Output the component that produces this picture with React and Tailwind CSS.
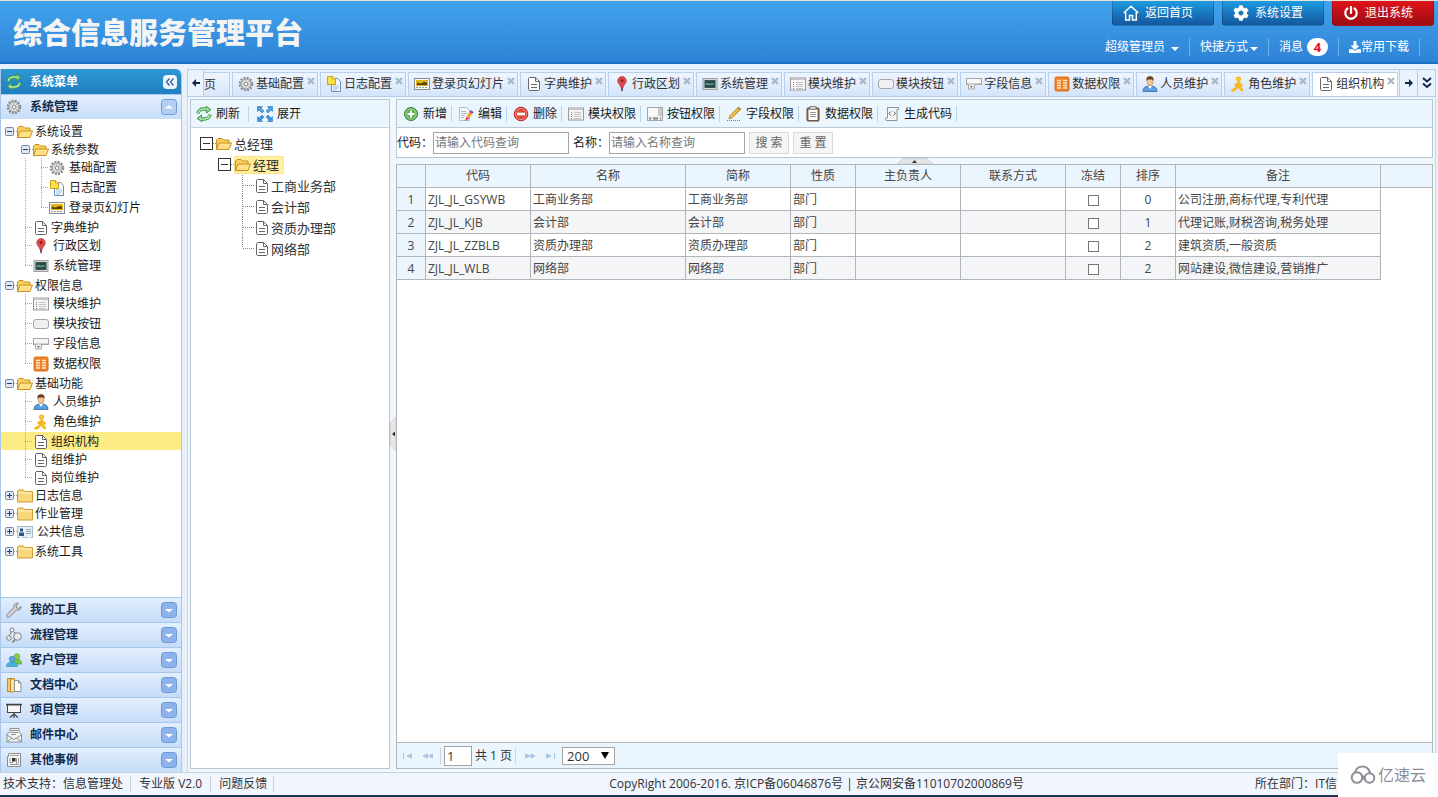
import React, { useState } from 'react';
import { FaCog, FaPowerOff, FaDownload } from 'react-icons/fa';

const iconShapes = {
  refresh: (
    <g fill="none" strokeLinejoin="round">
      <path d="M2 7.500C2.300 4.500 5 2.800 8 3h3" stroke="#3f9a48" strokeWidth="3.400" />
      <path d="M10 .3L15 3.600 10.500 7z" fill="#8fd68c" stroke="#3f9a48" />
      <path d="M14 8.500C13.700 11.500 11 13.200 8 13H5" stroke="#3f9a48" strokeWidth="3.400" />
      <path d="M6 15.700L1 12.400 5.500 9z" fill="#8fd68c" stroke="#3f9a48" />
      <path d="M2.200 7C2.800 4.500 5 3 8 3h4M13.800 9C13.200 11.500 11 13 8 13H4" stroke="#b5e8b0" strokeWidth="1.600" />
    </g>
  ),
  gear: (
    <g fill="none" stroke="#8c8c8c">
      <circle cx="8" cy="8" r="6" strokeWidth="2.600" strokeDasharray="1.900 1.240" />
      <circle cx="8" cy="8" r="5" fill="#e3e3e3" stroke="#9a9a9a" />
      <circle cx="8" cy="8" r="1.800" fill="#fff" />
      <path d="M8 3.500v2.500M8 10v2.500M3.500 8H6M10 8h2.500M5 5l1.500 1.500M11 5L9.500 6.500M5 11l1.500-1.500M11 11L9.500 9.500" stroke="#b5b5b5" />
    </g>
  ),
  log: (
    <g>
      <path d="M5.500 2.500h6l3 3v10h-9z" fill="#f5f9fd" stroke="#6f8fae" />
      <path d="M7 10h6M7 12h6M7 14h4" stroke="#9fc0dd" />
      <path d="M1.500.5h5l3 2.500v5.500h-8z" fill="#fbe04a" stroke="#c9a21c" />
      <path d="M6.500.5V3h3" fill="#fff6b8" stroke="#c9a21c" />
    </g>
  ),
  slide: (
    <g>
      <rect x=".5" y="2.500" width="15" height="11" fill="#fafafa" stroke="#8a8a8a" />
      <rect x="2" y="4" width="12" height="6" fill="#e0b414" />
      <path d="M3 6.500l3 1 2-.5 2-1 3 .5v2.500H3z" fill="#5a4508" />
      <path d="M2 11.500h12" stroke="#999" strokeDasharray="2 1" />
    </g>
  ),
  doc: (
    <g fill="none" stroke="#666">
      <path d="M2.500 3c0-1 .5-1.500 1.500-1.500h5.500l4 4V13c0 1-.5 1.500-1.500 1.500H4c-1 0-1.500-.5-1.500-1.500z" fill="#fff" />
      <path d="M9.500 1.500v4h4M5 8.500h6M5 11.500h6" />
    </g>
  ),
  pin: (
    <g>
      <path d="M7 8h2v6l-1 2-1-2z" fill="#5c5c66" />
      <path d="M8 .5a4.300 4.300 0 0 1 4.300 4.300C12.300 7.500 9.500 9 8.800 12H7.200C6.500 9 3.700 7.500 3.700 4.800A4.300 4.300 0 0 1 8 .5z" fill="#e1484a" stroke="#b32c32" strokeWidth=".6" />
      <circle cx="8" cy="4.600" r="1.500" fill="#8d1b22" />
    </g>
  ),
  monitor: (
    <g>
      <rect x="1" y="2.500" width="14" height="11" fill="#d5d8d8" stroke="#9da2a2" />
      <rect x="3" y="4.500" width="10" height="7" fill="#234b47" stroke="#3a5553" />
      <path d="M4 9l1.500-2L7 9l1.500-1h3" fill="none" stroke="#9fe0c8" strokeWidth=".9" />
    </g>
  ),
  list: (
    <g>
      <rect x=".5" y="2" width="15" height="12" fill="#f6f6f6" stroke="#9a9a9a" />
      <path d="M1 3.500h14" stroke="#c5c5c5" />
      <path d="M3 6.500h1M3 8.500h1M3 10.500h1M3 12.500h1" stroke="#888" />
      <path d="M6 6.500h7M6 8.500h7M6 10.500h7M6 12.500h7" stroke="#c2c2c2" />
    </g>
  ),
  button: <rect x=".5" y="3.500" width="15" height="9" rx="2.500" fill="#f0f0f3" stroke="#a6a6ad" />,
  combo: (
    <g>
      <rect x=".5" y="2.500" width="15" height="6" fill="#f7f7f7" stroke="#a5a5a5" />
      <path d="M1 7.500h14" stroke="#d0d0d0" />
      <path d="M2.500 8.500v4.500h6V8.500" fill="#f4f4f4" stroke="#a5a5a5" />
      <path d="M4 10h3L5.500 12z" fill="#666" />
    </g>
  ),
  data: (
    <g>
      <rect x="1" y="1" width="14" height="14" rx="1.500" fill="#f08024" stroke="#d9701c" />
      <path d="M3 4.500h4M9 4.500h4M3 7h4M9 7h4M3 9.500h4M9 9.500h4M3 12h4M9 12h4" stroke="#ffe8cc" strokeWidth="1.300" />
    </g>
  ),
  person: (
    <g>
      <path d="M1 15.500c0-4 2.500-5.500 7-5.500s7 1.500 7 5.500z" fill="#5b9be0" stroke="#356ba8" strokeWidth=".8" />
      <path d="M6 10l2 3 2-3z" fill="#fff" />
      <ellipse cx="8" cy="5.500" rx="3" ry="4" fill="#f3c59a" stroke="#a9713f" strokeWidth=".5" />
      <path d="M4.500 5C4 1 6 .3 8 .3s4 .7 3.500 4.700C10.800 3.200 9 3.500 8 3.500S5.200 3.200 4.500 5z" fill="#6b3f20" />
    </g>
  ),
  runner: (
    <g fill="none" stroke="#f5b820" strokeWidth="2.600" strokeLinecap="round" strokeLinejoin="round">
      <circle cx="8.500" cy="3" r="1.800" fill="#ffd54a" strokeWidth="1.500" />
      <path d="M8.500 6.500L8 10l4 4M8 10l-2.500 3-3 1.500M8.500 7L5.500 9M9 7l2.500 2.500" />
    </g>
  ),
  folderOpen: (
    <g stroke="#c8921a" strokeLinejoin="round">
      <path d="M.5 13.500V4L2 2.500h4L7.500 4h5.500v3" fill="#f9d05f" />
      <path d="M.5 13.500L3 7h12.500L13 13.500z" fill="#ffe08a" />
    </g>
  ),
  folder: (
    <g stroke="#cf9d30" strokeLinejoin="round">
      <path d="M.5 14V3l1-1h5L8 3.500h7.500V14z" fill="#f8d67c" />
      <path d="M1 5h14" stroke="#fff2c9" />
    </g>
  ),
  card: (
    <g>
      <rect x=".5" y="2.500" width="15" height="11" fill="#e4eff6" stroke="#a9bccb" />
      <path d="M3 4.500h3v3H3zM2 12V8.500h5V12z" fill="#2a5a85" />
      <path d="M9 5.500h5M9 7.500h5M9 9.500h5" stroke="#8fa6b8" />
      <path d="M3 13.500h2M11 13.500h2" stroke="#fff" />
    </g>
  ),
  wrench: (
    <path d="M15 4.500l-2.500 2-2-.8-.4-2 2.400-2C10.500.3 7.500 2 7.900 5.200L1.200 12.500c-1.300 1.600.8 3.600 2.300 2.200L10.500 8C13 8.800 15.500 7 15 4.500z" fill="#d4d4d4" stroke="#777" strokeWidth=".9" />
  ),
  flow: (
    <g fill="#eee" stroke="#858585">
      <path d="M6 3.500L3 9M6 3.500l5 4" fill="none" />
      <circle cx="6" cy="3" r="2" />
      <circle cx="3" cy="11" r="2.300" />
      <circle cx="11.500" cy="9.500" r="3.800" fill="#e3ebf1" />
      <path d="M9 12.500l-2.500 3" strokeWidth="1.800" />
    </g>
  ),
  customers: (
    <g>
      <circle cx="11" cy="4.500" r="2.800" fill="#8bd04a" stroke="#4b9a25" strokeWidth=".6" />
      <path d="M7 12c0-3.500 1.500-4.500 4.500-4.500s4.300 1.500 4.300 4.500z" fill="#7cc843" stroke="#4b9a25" strokeWidth=".6" />
      <circle cx="6" cy="7" r="2.700" fill="#5ba9e6" stroke="#2c73b4" strokeWidth=".6" />
      <path d="M.5 14.500C.5 11 3 10 6 10s5.500 1 5.500 4.500z" fill="#45b3d6" stroke="#2c8fb4" strokeWidth=".6" />
    </g>
  ),
  docs: (
    <g>
      <path d="M1.500 1.500h6v13h-6z" fill="#f7c86b" stroke="#c28a2b" />
      <path d="M4.500 2.500l4-1v13l-4 .8z" fill="#fde2a4" stroke="#c28a2b" />
      <path d="M8.500 3.500h4l2.500 2.500v8.500H8.500z" fill="#fff" stroke="#8d8d8d" />
      <path d="M12.500 3.500V6H15" fill="none" stroke="#8d8d8d" />
    </g>
  ),
  projector: (
    <g fill="none" stroke="#444">
      <path d="M0 2.500h16" strokeWidth="1.500" />
      <rect x="1.500" y="3" width="13" height="7.500" fill="#f7f7f7" />
      <path d="M8 10.500v3M8 12l-4 3.500M8 12l4 3.500M8 12v4" strokeWidth="1.200" />
    </g>
  ),
  mail: (
    <g stroke="#8b9494">
      <path d="M1 7l3-2V1.500h9V5l2.500 2v8H1z" fill="#f0f2f2" />
      <path d="M5 3.500h7M5 5.500h7M5 7.500h5" />
      <path d="M1 8l7 4.500L15.500 8M1 15l5-4M15.500 15l-5-4" fill="none" />
    </g>
  ),
  news: (
    <g>
      <path d="M2.500 1.500h12v13h-13v-10h1z" fill="#f7f7f7" stroke="#8b8b8b" />
      <path d="M4 3.500h9M4 12.500h9M4 10.500h3M10.500 6v7M12.500 6v5M4 6v5" stroke="#999" />
      <rect x="6" y="6" width="3.500" height="3.500" fill="#333" />
    </g>
  ),
  expand: (
    <g fill="#3d97e0" stroke="#1f6db3" strokeWidth=".5">
      <path d="M.5.500h5L4 2l3 3-2 2-3-3L.5 5.500zM15.500.5v5L14 4l-3 3-2-2 3-3L10.500.5zM.5 15.500v-5L2 12l3-3 2 2-3 3 1.500 1.500zM15.500 15.500h-5L12 14l-3-3 2-2 3 3 1.500-1.500z" />
      <path d="M2 2l3.500 3.500M14 2l-3.500 3.500" stroke="#b9e0ff" />
    </g>
  ),
  add: (
    <g>
      <circle cx="8" cy="8" r="6.500" fill="#5fb356" stroke="#3a7d35" />
      <circle cx="8" cy="8" r="5.200" fill="none" stroke="#b8e2b0" strokeWidth=".7" />
      <path d="M8 4.500v7M4.500 8h7" stroke="#fff" strokeWidth="2" />
    </g>
  ),
  remove: (
    <g>
      <circle cx="8" cy="8" r="6.800" fill="#e04a3c" stroke="#b12c22" />
      <circle cx="8" cy="8" r="5.600" fill="none" stroke="#f6a79f" strokeWidth=".7" />
      <path d="M4 8h8" stroke="#fff" strokeWidth="2.600" />
    </g>
  ),
  edit: (
    <g>
      <path d="M1.500 1.500h7l3 3v10h-10z" fill="#f7f9fc" stroke="#b3bfd0" />
      <path d="M3 5.500h5M3 7.500h6M3 9.500h4M3 11.500h3" stroke="#a9b8d0" />
      <path d="M13 6.500l-3 4.500" stroke="#f0a428" strokeWidth="3.400" />
      <path d="M12 5l3 2" stroke="#8a4fae" strokeWidth="2.500" />
      <path d="M8.500 10.500l-1.500 4.500 4.500-2.500z" fill="#e0455a" />
    </g>
  ),
  buttons: (
    <g>
      <rect x=".5" y="1.500" width="15" height="13" fill="#ededed" stroke="#a5a5a5" />
      <rect x="1" y="2" width="10" height="8" fill="#fafafa" />
      <rect x="11" y="2" width="4" height="8" fill="#cacaca" />
      <path d="M2 12.500h2M6 12.500h5M13 12.500h1" stroke="#888" strokeWidth="2" />
    </g>
  ),
  pencil: (
    <g>
      <path d="M12.500 1L15 3 6.500 11.500 3 13l1-3.500z" fill="#f1bc45" stroke="#a9762a" strokeWidth=".8" />
      <path d="M11.500 2L14 4" stroke="#777" />
      <path d="M1 14.500h14" stroke="#3f86d8" strokeDasharray="1 1" />
    </g>
  ),
  clipboard: (
    <g>
      <rect x="2" y="2" width="12" height="13" rx="1" fill="#8c6f57" stroke="#5f4a3a" />
      <rect x="3.500" y="3.500" width="9" height="10.500" fill="#fff" />
      <rect x="5" y=".5" width="6" height="3" fill="#d5d5d5" stroke="#666" strokeWidth=".7" />
      <path d="M5 6.500h6M5 8.500h6M5 10.500h6" stroke="#999" />
    </g>
  ),
  code: (
    <g fill="none" stroke="#8a9499">
      <path d="M3.500 12V1.500h11v2h-1.500V14.500H2.500C1.500 14.500 1.500 12.500 1.500 12h2" fill="#f3f5f6" />
      <path d="M7 5.500L5 7.500l2 2M9.500 5.500l2 2-2 2" stroke="#555" />
    </g>
  ),
};

const Icon = ({ name }) => (
  <svg viewBox="0 0 16 16" className="w-4 h-4 shrink-0" aria-hidden="true">{iconShapes[name]}</svg>
);

// rails: the branch cells drawn before a row. b = vertical line, t = tee, l = last elbow, e = empty
const menuTree = [
  { title: '系统设置', icon: 'folderOpen', toggle: 'minus', rails: '' },
  { title: '系统参数', icon: 'folderOpen', toggle: 'minus', rails: 'e' },
  { title: '基础配置', icon: 'gear', tall: true, rails: 'ebt' },
  { title: '日志配置', icon: 'log', tall: true, rails: 'ebt' },
  { title: '登录页幻灯片', icon: 'slide', tall: true, rails: 'ebl' },
  { title: '字典维护', icon: 'doc', rails: 'et' },
  { title: '行政区划', icon: 'pin', tall: true, rails: 'et' },
  { title: '系统管理', icon: 'monitor', tall: true, rails: 'el' },
  { title: '权限信息', icon: 'folderOpen', toggle: 'minus', rails: '' },
  { title: '模块维护', icon: 'list', tall: true, rails: 'et' },
  { title: '模块按钮', icon: 'button', tall: true, rails: 'et' },
  { title: '字段信息', icon: 'combo', tall: true, rails: 'et' },
  { title: '数据权限', icon: 'data', tall: true, rails: 'el' },
  { title: '基础功能', icon: 'folderOpen', toggle: 'minus', rails: '' },
  { title: '人员维护', icon: 'person', tall: true, rails: 'et' },
  { title: '角色维护', icon: 'runner', tall: true, rails: 'et' },
  { title: '组织机构', icon: 'doc', rails: 'et' },
  { title: '组维护', icon: 'doc', rails: 'et' },
  { title: '岗位维护', icon: 'doc', rails: 'el' },
  { title: '日志信息', icon: 'folder', toggle: 'plus', rails: '' },
  { title: '作业管理', icon: 'folder', toggle: 'plus', rails: '' },
  { title: '公共信息', icon: 'card', toggle: 'plus', tall: true, rails: '' },
  { title: '系统工具', icon: 'folder', toggle: 'plus', rails: '' },
];

const menuGroups = [
  { title: '我的工具', icon: 'wrench' },
  { title: '流程管理', icon: 'flow' },
  { title: '客户管理', icon: 'customers' },
  { title: '文档中心', icon: 'docs' },
  { title: '项目管理', icon: 'projector' },
  { title: '邮件中心', icon: 'mail' },
  { title: '其他事例', icon: 'news' },
];

const tabs = [
  { title: '基础配置', icon: 'gear' },
  { title: '日志配置', icon: 'log' },
  { title: '登录页幻灯片', icon: 'slide' },
  { title: '字典维护', icon: 'doc' },
  { title: '行政区划', icon: 'pin' },
  { title: '系统管理', icon: 'monitor' },
  { title: '模块维护', icon: 'list' },
  { title: '模块按钮', icon: 'button' },
  { title: '字段信息', icon: 'combo' },
  { title: '数据权限', icon: 'data' },
  { title: '人员维护', icon: 'person' },
  { title: '角色维护', icon: 'runner' },
  { title: '组织机构', icon: 'doc' },
];

const actions = [
  { title: '新增', icon: 'add' },
  { title: '编辑', icon: 'edit' },
  { title: '删除', icon: 'remove' },
  { title: '模块权限', icon: 'list' },
  { title: '按钮权限', icon: 'buttons' },
  { title: '字段权限', icon: 'pencil' },
  { title: '数据权限', icon: 'clipboard' },
  { title: '生成代码', icon: 'code' },
];

const departments = ['工商业务部', '会计部', '资质办理部', '网络部'];

const columns = ['代码', '名称', '简称', '性质', '主负责人', '联系方式', '冻结', '排序', '备注'];

const rows = [
  { code: 'ZJL_JL_GSYWB', name: '工商业务部', kind: '部门', sort: 0, remark: '公司注册,商标代理,专利代理' },
  { code: 'ZJL_JL_KJB', name: '会计部', kind: '部门', sort: 1, remark: '代理记账,财税咨询,税务处理' },
  { code: 'ZJL_JL_ZZBLB', name: '资质办理部', kind: '部门', sort: 2, remark: '建筑资质,一般资质' },
  { code: 'ZJL_JL_WLB', name: '网络部', kind: '部门', sort: 2, remark: '网站建设,微信建设,营销推广' },
];

const Header = () => (
  <header className="h-16 shrink-0 flex justify-between border-t border-t-[#e6e6dc] border-b-2 border-b-[#1471c4] bg-gradient-to-b from-[#41a3ec] to-[#2f83d6] text-white overflow-hidden">
    <h1 className="pl-[13px] pt-[11px] text-[29px] leading-[42px] font-black text-[#f4f4f4]">综合信息服务管理平台</h1>
    <div className="flex flex-col items-end">
      <div className="flex gap-2 pr-1">
        <HeaderButton title="返回首页" tone="from-[#1e9be0] to-[#15579f]">
          <svg viewBox="0 0 16 16" className="w-4 h-4" fill="none" stroke="#fff" strokeWidth="1.500">
            <path d="M.7 8L8 1.300 15.300 8M2.700 7v8h3.800v-4.500h3V15h3.800V7" />
          </svg>
        </HeaderButton>
        <HeaderButton title="系统设置" tone="from-[#1e9be0] to-[#15579f]"><FaCog className="w-4 h-4" /></HeaderButton>
        <HeaderButton title="退出系统" tone="from-[#e0141a] to-[#9c0d14]"><FaPowerOff className="w-4 h-4 p-px" /></HeaderButton>
      </div>
      <nav className="flex items-center mt-3 mr-[18px] leading-[18px]">
        <a href="#user" className="flex items-center gap-1.5 px-2.5 border-r border-[#6bb0ea]">超级管理员<Caret /></a>
        <a href="#shortcut" className="flex items-center gap-0.5 px-2.5 border-r border-[#6bb0ea]">快捷方式<Caret /></a>
        <a href="#message" className="flex items-center gap-1 px-2.5 border-r border-[#6bb0ea]">
          消息<span className="w-[21px] h-[18px] rounded-full bg-white text-[#e8101a] text-[13px] leading-[18px] font-bold text-center">4</span>
        </a>
        <a href="#download" className="flex items-center px-2.5 border-r border-[#6bb0ea]"><FaDownload className="w-3 h-3" />常用下载</a>
      </nav>
    </div>
  </header>
);

const HeaderButton = ({ title, tone, children }) => (
  <button className={`w-[102px] h-[25px] flex items-center pl-2.5 gap-1.5 rounded-b border border-t-0 border-black/20 bg-gradient-to-b ${tone}`}>
    {children}
    {title}
  </button>
);

const Caret = () => <svg viewBox="0 0 8 4" className="w-2 h-1 mt-1" fill="#fff"><path d="M0 0h8L4 4z" /></svg>;

const Rail = ({ kind, tall }) => {
  const h = tall ? 20 : 18;
  return (
    <svg width="16" height={h} className="shrink-0" stroke="#a8a8a8" strokeDasharray="1 1" fill="none">
      {kind !== 'e' && <path d={`M8.500 0V${kind === 'l' ? 9 : h}`} />}
      {(kind === 't' || kind === 'l') && <path d="M8 9.500h8" />}
    </svg>
  );
};

const Toggle = ({ kind }) => (
  <svg viewBox="0 0 16 18" className="w-4 h-[18px] shrink-0" fill="none">
    <path d="M13 9.500h3" stroke="#a8a8a8" strokeDasharray="1 1" />
    <rect x="4.500" y="5.500" width="8" height="8" rx="1" fill="#dfe6f2" stroke="#7189ad" />
    <path d={kind === 'plus' ? 'M6 9.500h5M8.500 7v5' : 'M6 9.500h5'} stroke="#1c3f78" />
  </svg>
);

const MenuRow = ({ item, active, onSelect }) => (
  <li>
    <button
      onClick={() => onSelect(item.title)}
      className={`w-full flex items-start text-left ${item.tall ? 'h-5' : 'h-[18px]'} ${active ? 'bg-[#fdec85]' : ''}`}
    >
      {item.rails.split('').map((kind, i) => <Rail key={i} kind={kind} tall={item.tall} />)}
      {item.toggle && <Toggle kind={item.toggle} />}
      <span className={`flex items-center h-5 whitespace-nowrap ${item.tall ? 'gap-1' : 'gap-0.5'}`}>
        <Icon name={item.icon} />{item.title}
      </span>
    </button>
  </li>
);

const Sidebar = () => {
  const [current, setCurrent] = useState('组织机构');
  return (
    <aside className="w-[182px] shrink-0 flex flex-col border-x border-[#a9c6e8] bg-white rounded-tr-md overflow-hidden">
      <div className="h-[25px] flex items-center pl-[5px] pr-1 bg-gradient-to-b from-[#2e97d2] to-[#1f7fc0] text-white font-bold">
        <Icon name="refresh" />
        <span className="flex-1 pl-2">系统菜单</span>
        <button aria-label="收起菜单" className="w-[14px] h-[14px] rounded-sm bg-[#eef5fd] flex items-center justify-center">
          <svg viewBox="0 0 10 10" className="w-2.5 h-2.5" fill="none" stroke="#2a5f9e" strokeWidth="1.300"><path d="M4.500 1.500L1.500 5l3 3.500M8.500 1.500L5.500 5l3 3.500" /></svg>
        </button>
      </div>
      <GroupHeader title="系统管理" icon="gear" open />
      <ul className="flex-1 min-h-0 overflow-hidden pt-[3px]">
        {menuTree.map((item, i) => (
          <MenuRow key={i} item={item} active={item.title === current} onSelect={setCurrent} />
        ))}
      </ul>
      {menuGroups.map((group) => <GroupHeader key={group.title} {...group} />)}
    </aside>
  );
};

const GroupHeader = ({ title, icon, open }) => (
  <button className="h-[25px] shrink-0 w-full flex items-center pl-[5px] pr-1 border-t border-[#a5c8ec] bg-gradient-to-b from-[#e3effd] to-[#c6dcf8] text-[#12294a] font-bold text-left">
    <Icon name={icon} />
    <span className="flex-1 pl-2">{title}</span>
    <svg viewBox="0 0 16 16" className="w-4 h-4">
      <rect x=".5" y=".5" width="15" height="15" rx="3" fill={open ? '#b3cdf4' : '#8db3ec'} stroke="#6f98d6" />
      <path d={open ? 'M4 9.500h8L8 6z' : 'M4 7h8L8 10.500z'} fill="#fff" />
    </svg>
  </button>
);

const TabBar = () => {
  const [active, setActive] = useState('组织机构');
  return (
    <div className="h-[28px] shrink-0 flex border border-[#b4cfec] bg-[#eaf3fd] overflow-hidden">
      <button aria-label="向左滚动" className="w-4 shrink-0 flex items-center justify-center border-r border-[#b4cfec]"><ArrowGlyph flip /></button>
      <div className="flex-1 min-w-0 flex gap-[2px] pt-[2px] overflow-hidden">
        <div className="w-[26px] shrink-0 border-t border-r border-[#b9d0ec] bg-gradient-to-b from-[#eff5fe] to-[#d7e6fb] leading-[23px] text-[#333]">页</div>
        {tabs.map((tab) => (
          <div
            key={tab.title}
            className={`shrink-0 flex items-center pb-0.5 pl-[5px] pr-[2px] border border-b-0 border-[#b9d0ec] text-[#333] ${active === tab.title ? 'bg-white' : 'bg-gradient-to-b from-[#eff5fe] to-[#d3e4fb]'}`}
          >
            <button onClick={() => setActive(tab.title)} className="flex items-center gap-0.5 whitespace-nowrap"><Icon name={tab.icon} />{tab.title}</button>
            <button aria-label={`关闭${tab.title}`} className="self-start pt-1 pl-[3px]">
              <svg viewBox="0 0 8 8" className="w-2 h-2" stroke="#a3b8c4" strokeWidth="2"><path d="M1 1l6 6M7 1L1 7" /></svg>
            </button>
          </div>
        ))}
      </div>
      <button aria-label="向右滚动" className="w-[18px] shrink-0 flex items-center justify-center border-l border-[#b4cfec]"><ArrowGlyph /></button>
      <button aria-label="全部标签" className="w-[18px] shrink-0 flex items-center justify-center border-l border-[#b4cfec]">
        <svg viewBox="0 0 10 12" className="w-2.5 h-3" fill="none" stroke="#0f2747" strokeWidth="2"><path d="M1 1l4 3.500L9 1M1 6.500L5 10l4-3.500" /></svg>
      </button>
    </div>
  );
};

const ArrowGlyph = ({ flip }) => (
  <svg viewBox="0 0 8 8" className={`w-2 h-2 ${flip ? 'rotate-180' : ''}`} fill="#0f2747"><path d="M0 3h4V0l4 4-4 4V5H0z" /></svg>
);

const DepartmentTree = () => (
  <section className="w-[200px] shrink-0 flex flex-col border border-[#b9c6d4] bg-white">
    <div className="h-7 flex items-center pl-[5px] border-b border-[#c3d3e2] bg-[#eaf5fd]">
      <button className="flex items-center gap-1"><Icon name="refresh" />刷新</button>
      <span className="w-px h-4 ml-2 mr-2 bg-[#b9d3ea]" />
      <button className="flex items-center gap-1"><Icon name="expand" />展开</button>
    </div>
    <ul className="pt-[5px] text-[13px] text-[#333]">
      <li className="h-[21px] flex items-center pl-[9px]">
        <Box /><span className="w-[3px] border-b border-dotted border-[#888]" />
        <button className="flex items-center gap-0.5"><Icon name="folderOpen" />总经理</button>
      </li>
      <li className="h-[21px] flex items-center pl-[27px]">
        <Box /><span className="w-[3px] border-b border-dotted border-[#888]" />
        <button className="h-[18px] flex items-center gap-0.5 pr-1 border border-[#fbe48a] bg-[#ffef9e]"><Icon name="folderOpen" />经理</button>
      </li>
      {departments.map((name, i) => (
        <li key={name} className="h-[21px] flex items-center pl-[51px]">
          <svg width="12" height="21" stroke="#888" strokeDasharray="1 1" fill="none">
            <path d={`M.5 0V${i === departments.length - 1 ? 10 : 21}M1 10.500h11`} />
          </svg>
          <button className="flex items-center gap-px"><Icon name="doc" />{name}</button>
        </li>
      ))}
    </ul>
  </section>
);

const Box = () => (
  <svg viewBox="0 0 13 13" className="w-[13px] h-[13px]" fill="#fff" stroke="#333"><rect x=".5" y=".5" width="12" height="12" /><path d="M3 6.500h7" /></svg>
);

const SearchForm = () => (
  <form className="h-[30px] shrink-0 flex items-center border border-t-0 border-[#b9c6d4] bg-white" onSubmit={(e) => e.preventDefault()}>
    <label htmlFor="code">代码：</label>
    <input id="code" placeholder="请输入代码查询" className="w-[136px] h-[22px] px-px border border-[#a4a4a4] placeholder:text-[#777]" />
    <label htmlFor="name" className="pl-1">名称：</label>
    <input id="name" placeholder="请输入名称查询" className="w-[136px] h-[22px] px-px border border-[#a4a4a4] placeholder:text-[#777]" />
    <button type="submit" className="w-10 h-[22px] ml-1 border border-[#d9d9d9] bg-[#f5f5f5] text-[#666]">搜 索</button>
    <button type="reset" className="w-10 h-[22px] ml-1 border border-[#d9d9d9] bg-[#f5f5f5] text-[#666]">重 置</button>
  </form>
);

const cell = 'h-[23px] border-r border-b border-[#b2b5ba] px-0.5';

const DataGrid = () => (
  <table className="w-full table-fixed border-separate border-spacing-0 text-[#444]">
    <colgroup>
      <col className="w-[29px]" />
      <col className="w-[105px]" />
      <col className="w-[155px]" />
      <col className="w-[105px]" />
      <col className="w-[65px]" />
      <col className="w-[105px]" />
      <col className="w-[105px]" />
      <col className="w-[55px]" />
      <col className="w-[55px]" />
      <col className="w-[205px]" />
      <col />
    </colgroup>
    <thead>
      <tr className="bg-[#eaf5fd]">
        <th className={cell} />
        {columns.map((name) => <th key={name} className={`${cell} font-normal`}>{name}</th>)}
        <th className="border-b border-[#b2b5ba]" />
      </tr>
    </thead>
    <tbody>
      {rows.map((row, i) => {
        const dataCell = `${cell} pt-0.5 ${i % 2 ? 'bg-[#f4f5f7]' : 'bg-white'}`;
        return (
          <tr key={row.code}>
            <td className={`${cell} pt-0.5 bg-[#eaf5fd] text-center`}>{i + 1}</td>
            {[row.code, row.name, row.name, row.kind, '', ''].map((value, j) => (
              <td key={j} className={dataCell}>{value}</td>
            ))}
            <td className={dataCell}>
              <input type="checkbox" aria-label={`冻结${row.name}`} className="block mx-auto w-[11px] h-[11px] appearance-none border border-[#777] bg-white checked:bg-[#2f83d6]" />
            </td>
            <td className={`${dataCell} text-center`}>{row.sort}</td>
            <td className={dataCell}>{row.remark}</td>
            <td />
          </tr>
        );
      })}
    </tbody>
  </table>
);

const PageButton = ({ label, path }) => (
  <button aria-label={label} className="w-5 flex justify-center">
    <svg viewBox="0 0 12 8" className="w-3 h-2" fill="#a9c4e2" stroke="#a9c4e2"><path d={path} /></svg>
  </button>
);

const Pager = () => (
  <div className="h-[26px] shrink-0 flex items-center border-t border-[#b2b5ba] bg-[#eaf5fd] pl-px text-[#333]">
    <PageButton label="首页" path="M1.500 1v6M9.500 2L5 4l4.500 2z" />
    <PageButton label="上一页" path="M5.500 2L1 4l4.500 2zM10.500 2L7 4l3.500 2z" />
    <span className="w-px h-4 ml-[2px] mr-[3px] bg-[#c8d8e6]" />
    <input aria-label="页码" defaultValue="1" className="w-7 h-5 pl-0.5 border border-[#a4a4a4] bg-white text-[13px]" />
    <span className="px-[3px]">共 1 页</span>
    <span className="w-px h-4 mr-1 bg-[#c8d8e6]" />
    <PageButton label="下一页" path="M1.500 2L6 4 1.500 6zM7 2l4 2-4 2z" />
    <PageButton label="末页" path="M2.500 2L7 4 2.500 6zM10.500 1v6" />
    <span className="relative ml-0.5">
      <select aria-label="每页条数" defaultValue="200" className="block w-[53px] h-[18px] pl-1 appearance-none border border-[#a4a4a4] bg-white text-[13px] leading-4">
        <option>50</option>
        <option>100</option>
        <option>200</option>
      </select>
      <svg viewBox="0 0 8 7" className="absolute right-1.5 top-[5px] w-2 h-[7px] pointer-events-none"><path d="M0 0h8L4 7z" /></svg>
    </span>
  </div>
);

const Workspace = () => (
  <section className="flex-1 min-w-0 flex flex-col">
    <div className="h-[29px] shrink-0 flex items-center border border-[#b9c6d4] bg-[#eaf5fd]">
      {actions.map(({ title, icon }) => (
        <button key={title} className="h-4 flex items-center gap-1 pl-1.5 pr-1 border-r border-[#b9d3ea] whitespace-nowrap"><Icon name={icon} />{title}</button>
      ))}
    </div>
    <SearchForm />
    <div className="h-[6px] shrink-0 flex justify-center items-end">
      <svg viewBox="0 0 36 6" className="w-9 h-1.5"><path d="M0 6l6-5.500h24L36 6z" fill="#e3e6e8" stroke="#cfd3d6" /><path d="M15 5h5l-2.500-3z" fill="#333" /></svg>
    </div>
    <div className="flex-1 min-h-0 flex flex-col border border-[#b2b5ba] bg-white">
      <div className="flex-1 min-h-0 overflow-hidden"><DataGrid /></div>
      <Pager />
    </div>
  </section>
);

const Watermark = () => (
  <div className="absolute right-0 bottom-0 w-[100px] h-11 bg-white flex items-center justify-center gap-0.5 text-[#8b8f98] text-[16px]">
    <svg viewBox="0 0 26 20" className="w-[26px] h-5" fill="none" stroke="#8b8f98" strokeWidth="2">
      <circle cx="7" cy="12.500" r="5.300" />
      <circle cx="19.500" cy="13" r="4.800" />
      <path d="M5 7.500C6 3.500 9 1.500 12.500 1.500s6.500 2.500 7.500 6.500M12 14.500c1.500-1 2-2 2.700-3.500M11.500 10.500c2 1 2.500 3 4.500 5.500" />
    </svg>
    亿速云
  </div>
);

const Footer = () => (
  <footer className="h-[25px] shrink-0 flex items-center border-t border-[#c3d3e2] border-b-2 border-b-[#1d3357] bg-[#f0f5fe] text-[#333] whitespace-nowrap">
    <div className="flex pl-[3px] leading-4">
      <span className="pr-[7px] border-r border-[#c5cfdb]">技术支持：信息管理处</span>
      <span className="px-2 border-r border-[#c5cfdb]">专业版 V2.0</span>
      <a href="#feedback" className="pl-2 pr-1.5 border-r border-[#c5cfdb]">问题反馈</a>
    </div>
    <div className="flex-1 text-center pl-[104px]">CopyRight 2006-2016. 京ICP备06046876号 | 京公网安备11010702000869号</div>
    <div className="pr-[101px]">所在部门：IT信</div>
  </footer>
);

const App = () => (
  <div className="relative h-screen flex flex-col overflow-hidden bg-[#e8f1fb] text-[12px] leading-4 text-[#1a1a1a] font-['Open_Sans','Noto_Sans_CJK_SC',sans-serif]">
    <Header />
    <div className="flex-1 min-h-0 flex pt-[5px]">
      <Sidebar />
      <main className="flex-1 min-w-0 flex flex-col ml-[5px] mr-[2px]">
        <TabBar />
        <div className="flex-1 min-h-0 flex pt-[2px] pb-[3px] pl-[2px] pr-[2px] border-x border-[#c5d9ee] bg-[#f1f7fd]">
          <DepartmentTree />
          <div className="w-[6px] shrink-0 flex items-center">
            <svg viewBox="0 0 6 34" className="w-1.5 h-[34px]"><path d="M6 0L.5 6v22L6 34z" fill="#e6e8ea" stroke="#cfd3d6" /><path d="M5 14.500v5L2 17z" fill="#333" /></svg>
          </div>
          <Workspace />
        </div>
      </main>
    </div>
    <Footer />
    <Watermark />
  </div>
);

export default App;
